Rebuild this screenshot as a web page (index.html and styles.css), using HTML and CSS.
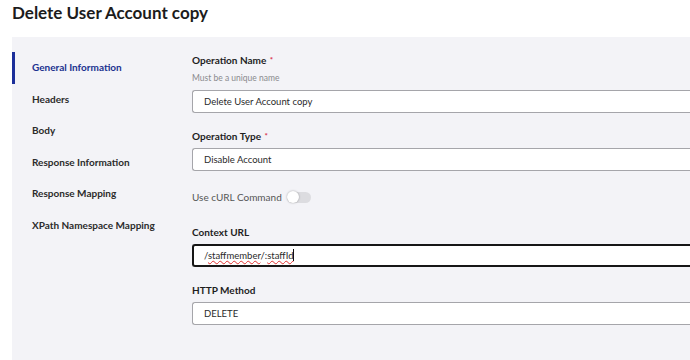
FILE: index.html
```html
<!DOCTYPE html>
<html lang="en">
<head>
    <meta charset="UTF-8">
    <title>Delete User Account copy</title>
    <link rel="stylesheet" href="styles.css">
</head>
<body>
    <h1 class="page-title">Delete User Account copy</h1>

    <div class="panel">
        <ul class="side-nav">
            <li class="active">General Information</li>
            <li>Headers</li>
            <li>Body</li>
            <li>Response Information</li>
            <li>Response Mapping</li>
            <li>XPath Namespace Mapping</li>
        </ul>

        <div class="form">
            <div class="field">
                <label class="field-label">Operation Name <span class="req">*</span></label>
                <div class="hint">Must be a unique name</div>
                <div class="input">Delete User Account copy</div>
            </div>

            <div class="field">
                <label class="field-label">Operation Type <span class="req">*</span></label>
                <div class="input">Disable Account</div>
            </div>

            <div class="toggle-row">
                <span>Use cURL Command</span>
                <span class="toggle"><span class="knob"></span></span>
            </div>

            <div class="field">
                <label class="field-label">Context URL</label>
                <div class="input focused">/<span class="misspelt">staffmember</span>/:<span class="misspelt">staffId</span><span class="caret"></span></div>
            </div>

            <div class="field">
                <label class="field-label">HTTP Method</label>
                <div class="input">DELETE</div>
            </div>
        </div>
    </div>
</body>
</html>
```

FILE: styles.css
```css
body {
    margin: 0;
    font-family: Lato, "Noto Sans", sans-serif;
    background-color: #fff;
    color: #1e1e1e;
    overflow: hidden;
}

.page-title {
    margin: 0;
    padding: 2px 12px 0;
    height: 35px;
    font-size: 17px;
    font-weight: bold;
    line-height: 22px;
    color: #1c1c1c;
}

.panel {
    display: flex;
    margin-left: 12px;
    height: 323px;
    background-color: #f3f3f7;
    overflow: hidden;
}

.side-nav {
    list-style: none;
    margin: 0;
    padding: 15px 0 0;
    width: 180px;
    flex-shrink: 0;
}

.side-nav li {
    height: 31.5px;
    line-height: 31.5px;
    padding-left: 17px;
    font-size: 10px;
    font-weight: bold;
    color: #2b2b2b;
    border-left: 3px solid transparent;
}

.side-nav li.active {
    color: #1a318f;
    border-left-color: #1c2f9a;
}

.form {
    flex: 1;
    padding-top: 16px;
}

.field {
    margin-bottom: 16px;
}

.field-label {
    display: block;
    font-size: 10px;
    font-weight: bold;
    line-height: 14px;
    margin-bottom: 5px;
}

.req {
    color: #d9304a;
    font-size: 8px;
    margin-left: 1px;
    vertical-align: 1px;
}

.hint {
    font-size: 8.5px;
    color: #8a8a8e;
    line-height: 12px;
    margin-bottom: 6px;
}

.input {
    height: 23px;
    line-height: 21px;
    box-sizing: border-box;
    padding-left: 11px;
    background-color: #fff;
    border: 1px solid #a5a5aa;
    border-right: none;
    border-radius: 3px 0 0 3px;
    font-size: 9.5px;
    color: #2a2a2a;
}

.input.focused {
    border: 2px solid #161616;
    border-right: none;
    line-height: 19px;
    padding-left: 10px;
}

.misspelt {
    text-decoration: underline wavy #e03030;
    text-decoration-thickness: 1px;
    text-underline-offset: 1px;
}

.caret {
    display: inline-block;
    width: 1px;
    height: 12px;
    background-color: #111;
    vertical-align: -2px;
}

.toggle-row {
    display: flex;
    align-items: center;
    gap: 5px;
    height: 14px;
    margin: 19px 0 21px;
    font-size: 10px;
    color: #555;
}

.toggle {
    position: relative;
    width: 24px;
    height: 11px;
    border-radius: 6px;
    background-color: #dcdce0;
}

.knob {
    position: absolute;
    left: 0;
    top: -0.5px;
    width: 12px;
    height: 12px;
    border-radius: 50%;
    background-color: #fff;
    box-shadow: 0 0 2px rgba(0, 0, 0, 0.35);
}
```
